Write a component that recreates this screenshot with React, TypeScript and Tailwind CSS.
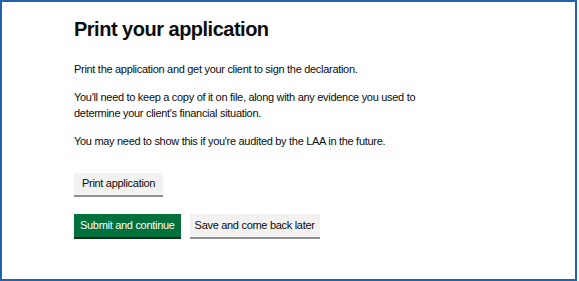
export default function App() {
  return (
    <div className="w-[577px] h-[281px] border-2 border-[#2262a8] bg-white pl-[72px] pt-[13px] text-[#0b0c0c] font-['Liberation_Sans',Arial,sans-serif]">
      <h1 className="text-[20px] leading-[28px] font-bold tracking-[-0.5px] mb-[18px]">
        Print your application
      </h1>

      <div className="text-[11px] leading-[16px] tracking-[-0.3px] space-y-[12px]">
        <p>Print the application and get your client to sign the declaration.</p>
        <p>
          You'll need to keep a copy of it on file, along with any evidence you used to
          <br />
          determine your client's financial situation.
        </p>
        <p>You may need to show this if you're audited by the LAA in the future.</p>
      </div>

      <div className="mt-[21px]">
        <button className="h-[22px] px-[8px] bg-[#f3f2f1] shadow-[0_2px_0_#929191] text-[11px] tracking-[-0.3px] leading-none">
          Print application
        </button>
      </div>

      <div className="mt-[19px] flex gap-[9px]">
        <button className="h-[23px] px-[6px] bg-[#00703c] text-white shadow-[0_2px_0_#002d18] text-[11px] tracking-[-0.3px] leading-none">
          Submit and continue
        </button>
        <button className="h-[23px] px-[5px] bg-[#f3f2f1] shadow-[0_2px_0_#929191] text-[11px] tracking-[-0.3px] leading-none">
          Save and come back later
        </button>
      </div>
    </div>
  );
}
